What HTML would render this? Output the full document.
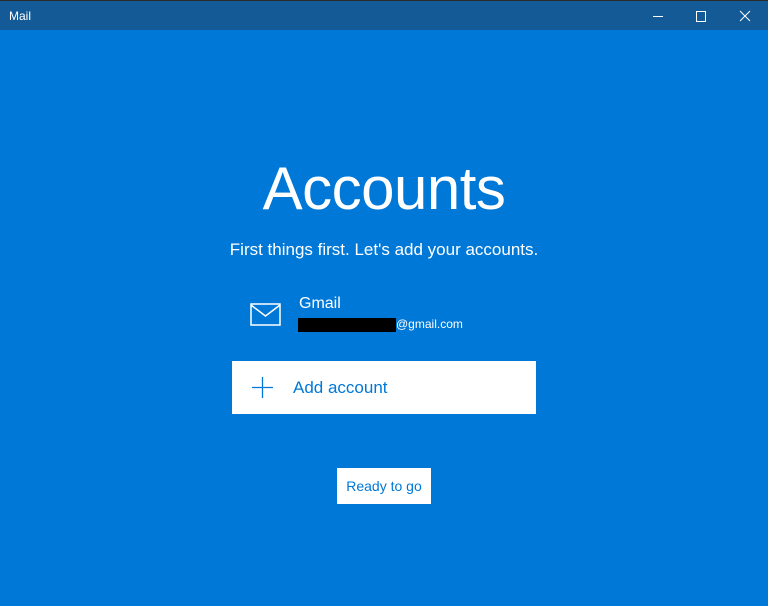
<!DOCTYPE html>
<html><head><meta charset="utf-8"><style>
html,body{margin:0;padding:0;width:768px;height:606px;overflow:hidden;background:#0078d7;font-family:"Liberation Sans",sans-serif;}
.tb{position:absolute;left:0;top:0;width:768px;height:30px;background:#145a96;border-top:1px solid #2b2b2b;box-sizing:border-box;}
.tb .t{position:absolute;left:9px;top:8px;color:#fff;font-size:12px;}
.main{position:absolute;left:0;top:30px;width:768px;height:576px;background:#0078d7;}
.h{position:absolute;left:0;width:768px;text-align:center;color:#fff;}
</style></head><body>
<div class="tb"><span class="t">Mail</span>
<svg style="position:absolute;left:640px;top:0" width="128" height="30"><g stroke="#fff" stroke-width="1" fill="none"><line x1="13" y1="15.5" x2="23" y2="15.5"/><rect x="56.5" y="10.5" width="9" height="10"/><line x1="100" y1="10" x2="110" y2="20"/><line x1="110" y1="10" x2="100" y2="20"/></g></svg>
</div>
<div class="main">
<div class="h" style="top:124px;font-size:60px;font-weight:normal;letter-spacing:-0.5px;">Accounts</div>
<div class="h" style="top:210px;font-size:17px;">First things first. Let's add your accounts.</div>
<svg style="position:absolute;left:250px;top:273px" width="31" height="23"><rect x="1" y="1" width="29" height="21" fill="none" stroke="#fff" stroke-width="1.5"/><polyline points="1,2 15.5,13 30,2" fill="none" stroke="#fff" stroke-width="1.5"/></svg>
<div style="position:absolute;left:299px;top:265px;color:#fff;font-size:16px;">Gmail</div>
<div style="position:absolute;left:298px;top:288px;width:98px;height:14px;background:#000;"></div>
<div style="position:absolute;left:396px;top:287px;color:#fff;font-size:12px;">@gmail.com</div>
<div style="position:absolute;left:232px;top:331px;width:304px;height:53px;background:#fff;">
<svg style="position:absolute;left:20px;top:16px" width="21" height="21"><g stroke="#0078d7" stroke-width="1.3"><line x1="10.5" y1="0" x2="10.5" y2="21"/><line x1="0" y1="10.5" x2="21" y2="10.5"/></g></svg>
<div style="position:absolute;left:61px;top:17px;color:#0078d7;font-size:17px;">Add account</div>
</div>
<div style="position:absolute;left:337px;top:438px;width:94px;height:36px;background:#fff;color:#0078d7;font-size:14px;text-align:center;line-height:36px;">Ready to go</div>
</div>
</body></html>
